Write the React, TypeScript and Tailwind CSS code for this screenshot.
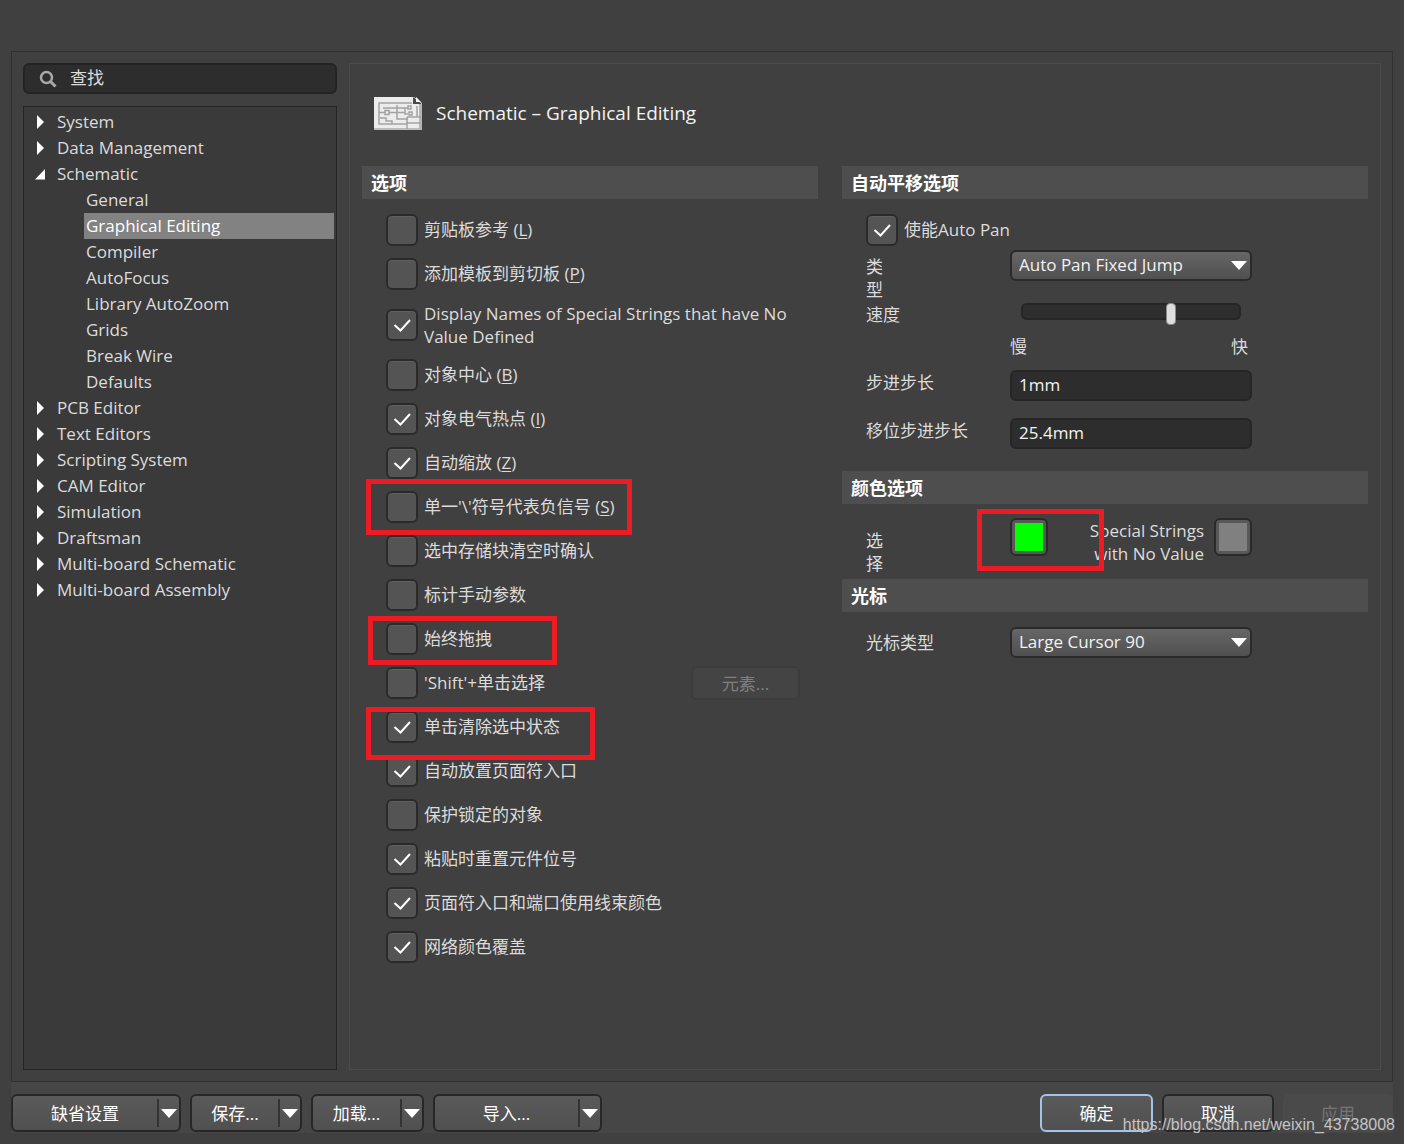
import React, { useState } from 'react';
import clsx from 'clsx';

interface TreeNode {
  label: string;
  children?: string[];
}

interface Option {
  text: string;
  hotkey?: string;
  checked?: boolean;
  mark?: string;
  tall?: boolean;
  button?: string;
}

const TREE: TreeNode[] = [
  { label: 'System' },
  { label: 'Data Management' },
  {
    label: 'Schematic',
    children: [
      'General',
      'Graphical Editing',
      'Compiler',
      'AutoFocus',
      'Library AutoZoom',
      'Grids',
      'Break Wire',
      'Defaults',
    ],
  },
  { label: 'PCB Editor' },
  { label: 'Text Editors' },
  { label: 'Scripting System' },
  { label: 'CAM Editor' },
  { label: 'Simulation' },
  { label: 'Draftsman' },
  { label: 'Multi-board Schematic' },
  { label: 'Multi-board Assembly' },
];

const OPTIONS: Option[] = [
  { text: '剪贴板参考', hotkey: 'L' },
  { text: '添加模板到剪切板', hotkey: 'P' },
  { text: 'Display Names of Special Strings that have No Value Defined', checked: true, tall: true },
  { text: '对象中心', hotkey: 'B' },
  { text: '对象电气热点', hotkey: 'I', checked: true },
  { text: '自动缩放', hotkey: 'Z', checked: true },
  { text: "单一'\\'符号代表负信号", hotkey: 'S', mark: '-left-5 -top-1.5 h-14 w-[266px]' },
  { text: '选中存储块清空时确认' },
  { text: '标计手动参数' },
  { text: '始终拖拽', mark: '-left-[18px] -top-px h-[49px] w-[189px]' },
  { text: "'Shift'+单击选择", button: '元素...' },
  { text: '单击清除选中状态', checked: true, mark: '-left-5 top-0.5 h-[53px] w-[229px]' },
  { text: '自动放置页面符入口', checked: true },
  { text: '保护锁定的对象' },
  { text: '粘贴时重置元件位号', checked: true },
  { text: '页面符入口和端口使用线束颜色', checked: true },
  { text: '网络颜色覆盖', checked: true },
];

const DownArrow = ({ className }: { className?: string }) => (
  <svg viewBox="0 0 16 9" className={clsx('h-[9px] w-4 fill-white', className)}>
    <path d="M0 0h16L8 9z" />
  </svg>
);

const Mark = ({ className }: { className: string }) => (
  <span className={clsx('pointer-events-none absolute z-10 border-5 border-[#ed1c24]', className)} />
);

const SheetIcon = () => (
  <svg viewBox="0 0 48 33" className="h-[33px] w-12 shrink-0" fill="none">
    <path d="M0 0h40l8 6v27H0z" fill="#ececec" />
    <path d="M0 31h48v2H0z" fill="#bdbdbd" />
    <path d="M45 7h3v26h-3z" fill="#b5b5b5" />
    <path d="M39 0l9 7h-9z" fill="#4a4a4a" />
    <path d="M42 0l5 5h-5z" fill="#fff" />
    <g stroke="#a2a2a2" strokeWidth="1.5">
      <path d="M38 6H5v21h28M43 9v11" />
      <path d="M9 11h25M5 15.500h6M15 15.500h16M23 8v14h11M31 11v6h3M6 21h6v3h6v3" />
      <path d="M11 13.500h4v4h-4zM34 9h3v3h-3zM35 15h3v3h-3z" />
      <path d="M33 20h14M33 26h14M33 20v12" />
    </g>
  </svg>
);

const Check = ({ id, defaultChecked }: { id: string; defaultChecked?: boolean }) => (
  <span className="relative size-8 shrink-0">
    <input
      id={id}
      type="checkbox"
      defaultChecked={defaultChecked}
      className="peer block size-8 appearance-none rounded-md border-2 border-[#2a2a2a] bg-[#545454] shadow-[inset_0_1px_0_#606060]"
    />
    <svg
      viewBox="0 0 32 32"
      className="pointer-events-none absolute inset-0 hidden size-8 fill-none stroke-white stroke-2 peer-checked:block"
    >
      <path d="M8.500 16l6 5.500L24 11" />
    </svg>
  </span>
);

const Section = ({ title }: { title: string }) => (
  <h2 className="h-[33px] bg-[#4e4e4e] px-[9px] text-lg leading-[34px] font-bold text-white">{title}</h2>
);

const Select = ({ id, value }: { id: string; value: string }) => (
  <div className="relative w-[242px]">
    <select
      id={id}
      className="block h-[31px] w-full appearance-none rounded-md border-2 border-[#2a2a2a] bg-linear-to-b from-[#666] to-[#505050] pb-0.5 pl-[7px] text-[#f2f2f2]"
    >
      <option>{value}</option>
    </select>
    <DownArrow className="pointer-events-none absolute top-[11px] right-[5px]" />
  </div>
);

const TextBox = ({ id, value }: { id: string; value: string }) => (
  <input
    id={id}
    type="text"
    defaultValue={value}
    className="h-[31px] w-[242px] rounded-md border-2 border-[#262626] bg-[#2d2d2d] px-[7px] pb-0.5 text-[#f2f2f2]"
  />
);

const SplitButton = ({ label, className }: { label: string; className: string }) => (
  <div
    className={clsx(
      'flex h-[38px] items-center rounded-md border-2 border-[#272727] bg-linear-to-b from-[#5a5a5a] to-[#505050]',
      className,
    )}
  >
    <button type="button" className="h-full flex-1 text-white">
      {label}
    </button>
    <button
      type="button"
      aria-label={`${label} 菜单`}
      className="flex h-7 w-[22px] items-center justify-center border-l-2 border-[#333]"
    >
      <DownArrow />
    </button>
  </div>
);

const Sidebar = () => {
  const [selected, setSelected] = useState('Graphical Editing');

  return (
    <aside className="flex w-[314px] shrink-0 flex-col gap-3">
      <label className="flex h-[31px] items-center gap-[13px] rounded-md border-2 border-[#232323] bg-[#2d2d2d] pl-[14px]">
        <svg viewBox="0 0 18 18" className="size-[18px] shrink-0 fill-none stroke-[#a8a8a8]">
          <circle cx="7.500" cy="7.500" r="5.500" strokeWidth="2.500" />
          <path d="M11.500 11.500l5 5" strokeWidth="3" />
        </svg>
        <input
          type="text"
          aria-label="查找"
          placeholder="查找"
          className="min-w-0 flex-1 bg-transparent pb-0.5 placeholder:text-[#dcdcdc]"
        />
      </label>

      <nav className="flex-1 border border-[#242424] bg-[#3a3a3a] pt-0.5 pr-0.5">
        <ul>
          {TREE.map((node) => (
            <li key={node.label}>
              <button type="button" className="flex h-[26px] w-full items-center pl-[10px]">
                <svg viewBox="0 0 12 14" className="mr-[11px] h-[14px] w-3 fill-white">
                  {node.children ? <path d="M1 12.500h10V2z" /> : <path d="M3 0l7 7-7 7z" />}
                </svg>
                <span className="pb-0.5">{node.label}</span>
              </button>
              {node.children && (
                <ul className="pl-[60px]">
                  {node.children.map((child) => (
                    <li key={child}>
                      <button
                        type="button"
                        onClick={() => setSelected(child)}
                        className={clsx(
                          'block h-[26px] w-full pb-0.5 pl-0.5 text-left',
                          child === selected && 'bg-[#828282] text-white',
                        )}
                      >
                        {child}
                      </button>
                    </li>
                  ))}
                </ul>
              )}
            </li>
          ))}
        </ul>
      </nav>
    </aside>
  );
};

const OptionList = () => (
  <section>
    <Section title="选项" />
    <div className="pt-[9px] pl-6">
      {OPTIONS.map((opt, i) => (
        <div key={opt.text} className={clsx('relative flex items-center', opt.tall ? 'h-[57px]' : 'h-11')}>
          <Check id={`opt-${i}`} defaultChecked={opt.checked} />
          <label htmlFor={`opt-${i}`} className={clsx('max-w-[380px] pl-1.5', !opt.tall && 'pb-0.5')}>
            {opt.text}
            {opt.hotkey && (
              <>
                {' '}
                (<u className="underline-offset-2">{opt.hotkey}</u>)
              </>
            )}
          </label>
          {opt.button && (
            <button
              type="button"
              disabled
              className="mr-[18px] ml-auto h-[34px] w-[109px] rounded-md border-2 border-[#3c3c3c] bg-[#444] text-[#808080]"
            >
              {opt.button}
            </button>
          )}
          {opt.mark && <Mark className={opt.mark} />}
        </div>
      ))}
    </div>
  </section>
);

const Swatch = ({ label, color }: { label: string; color: string }) => (
  <button
    type="button"
    aria-label={label}
    className="size-[38px] shrink-0 rounded-md border-2 border-[#2a2a2a] bg-[#585858] p-[3px]"
  >
    <span className={clsx('block size-full', color)} />
  </button>
);

const RightColumn = () => (
  <div>
    <Section title="自动平移选项" />
    <div className="pt-[15px] pb-[22px] pl-6">
      <div className="flex items-center">
        <Check id="autopan" defaultChecked />
        <label htmlFor="autopan" className="pb-0.5 pl-1.5">
          使能Auto Pan
        </label>
      </div>
      <div className="mt-1 flex">
        <div className="w-36 shrink-0 pt-[5px]">
          <label htmlFor="pan-style" className="block w-5">
            类型
          </label>
        </div>
        <Select id="pan-style" value="Auto Pan Fixed Jump" />
      </div>
      <div className="mt-0.5 flex">
        <label htmlFor="speed" className="w-36 shrink-0">
          速度
        </label>
        <input
          id="speed"
          type="range"
          defaultValue={69}
          className="ml-[11px] block h-[17px] w-[220px] appearance-none bg-transparent [&::-webkit-slider-runnable-track]:h-[17px] [&::-webkit-slider-runnable-track]:rounded-md [&::-webkit-slider-runnable-track]:bg-[#2e2e2e] [&::-webkit-slider-runnable-track]:shadow-[inset_0_0_0_2px_#262626] [&::-webkit-slider-thumb]:h-[22px] [&::-webkit-slider-thumb]:w-[10px] [&::-webkit-slider-thumb]:appearance-none [&::-webkit-slider-thumb]:rounded-sm [&::-webkit-slider-thumb]:border [&::-webkit-slider-thumb]:border-[#8a8a8a] [&::-webkit-slider-thumb]:bg-[#dedede]"
        />
      </div>
      <div className="mt-[9px] ml-36 flex w-[238px] justify-between">
        <span>慢</span>
        <span>快</span>
      </div>
      <div className="mt-3 flex">
        <label htmlFor="step" className="w-36 shrink-0 pt-px">
          步进步长
        </label>
        <TextBox id="step" value="1mm" />
      </div>
      <div className="mt-[17px] flex">
        <label htmlFor="shift-step" className="w-36 shrink-0 pt-px">
          移位步进步长
        </label>
        <TextBox id="shift-step" value="25.4mm" />
      </div>
    </div>

    <Section title="颜色选项" />
    <div className="flex pt-[14px] pb-1 pl-6">
      <div className="w-36 shrink-0 pt-[11px]">
        <span className="block w-5">选择</span>
      </div>
      <div className="relative flex w-[242px] justify-between">
        <Swatch label="选择" color="bg-[#00ff00]" />
        <div className="flex gap-[10px]">
          <span className="pt-px text-right">
            Special Strings
            <br />
            with No Value
          </span>
          <Swatch label="Special Strings with No Value" color="bg-[#808080]" />
        </div>
        <Mark className="-top-[9px] -left-[33px] h-[62px] w-[127px]" />
      </div>
    </div>

    <Section title="光标" />
    <div className="flex items-center pt-[15px] pl-6">
      <label htmlFor="cursor" className="w-36 shrink-0">
        光标类型
      </label>
      <Select id="cursor" value="Large Cursor 90" />
    </div>
  </div>
);

const Footer = () => (
  <footer className="relative mx-[11px] mb-[11px] flex h-[51px] items-end gap-[9px] bg-[#464646] pb-px">
    <SplitButton label="缺省设置" className="w-[170px]" />
    <SplitButton label="保存..." className="w-28" />
    <SplitButton label="加载..." className="w-[113px]" />
    <SplitButton label="导入..." className="w-[169px]" />
    <button
      type="button"
      className="ml-auto h-[38px] w-[113px] rounded-md border-2 border-[#a3c4e6] bg-linear-to-b from-[#5a5a5a] to-[#505050] text-white"
    >
      确定
    </button>
    <button
      type="button"
      className="h-[38px] w-28 rounded-md border-2 border-[#272727] bg-linear-to-b from-[#5a5a5a] to-[#505050] text-white"
    >
      取消
    </button>
    <button type="button" disabled className="h-[38px] w-[110px] rounded-md bg-[#4a4a4a] text-[#757575]">
      应用
    </button>
    <span className="pointer-events-none absolute -right-0.5 -bottom-1 font-['Liberation_Sans',sans-serif] text-base text-[#c4c4c4]">
      https://blog.csdn.net/weixin_43738008
    </span>
  </footer>
);

export default function App() {
  return (
    <div className="flex min-h-screen flex-col bg-[#404040] pt-[51px] font-['Open_Sans','Noto_Sans_CJK_SC',sans-serif] text-[17px] leading-[23px] text-[#dcdcdc]">
      <div className="mx-[11px] flex flex-1 gap-3 border border-[#303030] p-[11px]">
        <Sidebar />
        <main className="flex-1 border border-[#4b4b4b] px-3">
          <header className="flex h-[102px] items-center gap-[14px] pb-1 pl-3">
            <SheetIcon />
            <h1 className="text-[19px] text-[#f2f2f2]">Schematic – Graphical Editing</h1>
          </header>
          <div className="grid grid-cols-[456fr_526fr] gap-6">
            <OptionList />
            <RightColumn />
          </div>
        </main>
      </div>
      <Footer />
    </div>
  );
}
